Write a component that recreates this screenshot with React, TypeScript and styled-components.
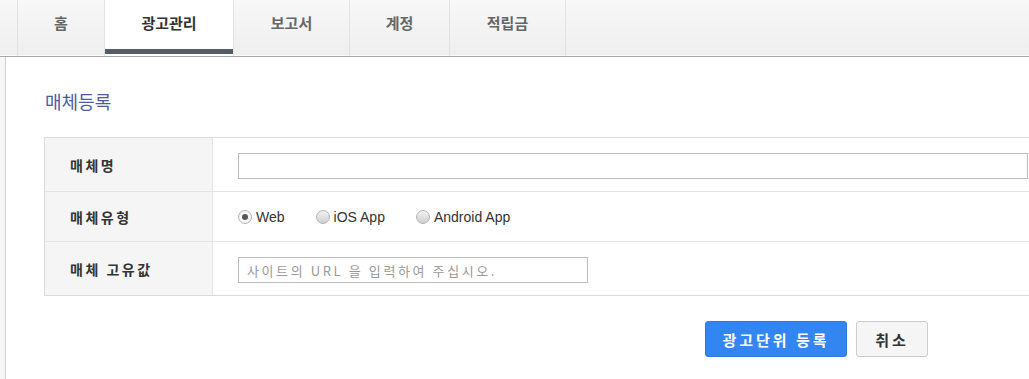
import React from "react";
import styled, { createGlobalStyle } from "styled-components";

const Global = createGlobalStyle`
  html, body { margin: 0; padding: 0; background: #fff; overflow: hidden; }
  body { font-family: "Noto Sans CJK KR", "Noto Sans", sans-serif; color: #333; }
  * { box-sizing: border-box; }
`;

const TabBar = styled.nav`
  display: flex;
  height: 57px;
  padding-left: 17px;
  background: linear-gradient(#f8f8f8, #eeeeee);
  border-bottom: 1px solid #a8a8a8;
  box-shadow: inset 0 -1px 0 #fafafa;
`;

const Tab = styled.div<{ $w: number; $active?: boolean }>`
  position: relative;
  width: ${(p) => p.$w}px;
  display: flex;
  align-items: center;
  justify-content: center;
  padding-bottom: 11px;
  border-left: 1px solid #e2e2e2;
  background: ${(p) => (p.$active ? "#fff" : "transparent")};
  font-size: 15px;
  font-weight: 700;
  color: ${(p) => (p.$active ? "#333" : "#666")};
  &:last-child { border-right: 1px solid #e2e2e2; }
  &::after {
    content: "";
    display: ${(p) => (p.$active ? "block" : "none")};
    position: absolute;
    left: 0;
    right: 0;
    bottom: 2px;
    height: 5px;
    background: #555c66;
  }
`;

const Body = styled.div`
  display: flex;
  min-height: 322px;
`;

const Rail = styled.div`
  width: 6px;
  flex: none;
  background: #f6f6f6;
  border-right: 1px solid #cfcfcf;
`;

const Main = styled.main`
  flex: 1;
  overflow: hidden;
  padding: 33px 0 0 38px;
`;

const Title = styled.h2`
  margin: 0 0 25px 1px;
  font-size: 18px;
  line-height: 22px;
  font-weight: 400;
  color: #4a5c9d;
`;

const Table = styled.div`
  display: grid;
  grid-template-columns: 168px 1fr;
  width: calc(100% + 30px);
  border: 1px solid #dadada;
`;

const HeadCell = styled.div<{ $h: number; $last?: boolean }>`
  height: ${(p) => p.$h}px;
  display: flex;
  align-items: center;
  padding-left: 25px;
  background: #f5f5f5;
  border-right: 1px solid #e3e3e3;
  border-bottom: ${(p) => (p.$last ? "none" : "1px solid #e3e3e3")};
  font-size: 14px;
  font-weight: 700;
  letter-spacing: 2.5px;
  color: #333;
  white-space: pre;
`;

const ValueCell = styled.div<{ $h: number; $last?: boolean }>`
  height: ${(p) => p.$h}px;
  display: flex;
  align-items: center;
  padding-left: 25px;
  border-bottom: ${(p) => (p.$last ? "none" : "1px solid #e3e3e3")};
`;

const TextInput = styled.input<{ $w: number }>`
  width: ${(p) => p.$w}px;
  height: 26px;
  margin-top: 3px;
  border: 1px solid #bdbdbd;
  padding: 0 8px;
  font-family: "Noto Sans CJK KR", sans-serif;
  font-size: 13px;
  letter-spacing: 2.6px;
  color: #333;
  outline: none;
  &::placeholder { color: #999; }
`;

const RadioGroup = styled.div`
  display: flex;
  align-items: center;
  gap: 31px;
`;

const RadioItem = styled.label`
  display: flex;
  align-items: center;
  gap: 4px;
  font-family: "Liberation Sans", Arial, sans-serif;
  font-size: 14px;
  color: #333;
`;

const RadioDot = styled.span<{ $on?: boolean }>`
  position: relative;
  width: 14px;
  height: 14px;
  border-radius: 50%;
  border: 1px solid #b4b4b4;
  background: ${(p) =>
    p.$on ? "radial-gradient(#fff, #eee)" : "linear-gradient(#f2f2f2, #cfcfcf)"};
  &::after {
    content: "";
    display: ${(p) => (p.$on ? "block" : "none")};
    position: absolute;
    left: 3px;
    top: 3px;
    width: 6px;
    height: 6px;
    border-radius: 50%;
    background: #555;
  }
`;

const ButtonBar = styled.div`
  display: flex;
  gap: 9px;
  margin-top: 25px;
  padding-left: 661px;
`;

const Button = styled.button<{ $primary?: boolean }>`
  height: 36px;
  padding: 0;
  width: ${(p) => (p.$primary ? 142 : 72)}px;
  border-radius: 3px;
  border: 1px solid ${(p) => (p.$primary ? "#2a78e0" : "#cccccc")};
  background: ${(p) => (p.$primary ? "#3385f2" : "#f5f5f5")};
  color: ${(p) => (p.$primary ? "#fff" : "#333")};
  font-family: "Noto Sans CJK KR", sans-serif;
  font-size: 15px;
  font-weight: 700;
  letter-spacing: 3px;
  cursor: pointer;
`;

const tabs = [
  { label: "홈", w: 87 },
  { label: "광고관리", w: 129, active: true },
  { label: "보고서", w: 116 },
  { label: "계정", w: 100 },
  { label: "적립금", w: 117 },
];

export default function App() {
  return (
    <>
      <Global />
      <TabBar>
        {tabs.map((t) => (
          <Tab key={t.label} $w={t.w} $active={t.active}>
            {t.label}
          </Tab>
        ))}
      </TabBar>
      <Body>
        <Rail />
        <Main>
          <Title>매체등록</Title>
          <Table>
            <HeadCell $h={54}>매체명</HeadCell>
            <ValueCell $h={54}>
              <TextInput $w={790} />
            </ValueCell>
            <HeadCell $h={50}>매체유형</HeadCell>
            <ValueCell $h={50}>
              <RadioGroup>
                <RadioItem>
                  <RadioDot $on />
                  Web
                </RadioItem>
                <RadioItem>
                  <RadioDot />
                  iOS App
                </RadioItem>
                <RadioItem>
                  <RadioDot />
                  Android App
                </RadioItem>
              </RadioGroup>
            </ValueCell>
            <HeadCell $h={53} $last>{"매체 고유값"}</HeadCell>
            <ValueCell $h={53} $last>
              <TextInput $w={350} placeholder="사이트의 URL 을 입력하여 주십시오." />
            </ValueCell>
          </Table>
          <ButtonBar>
            <Button $primary>광고단위 등록</Button>
            <Button>취소</Button>
          </ButtonBar>
        </Main>
      </Body>
    </>
  );
}
